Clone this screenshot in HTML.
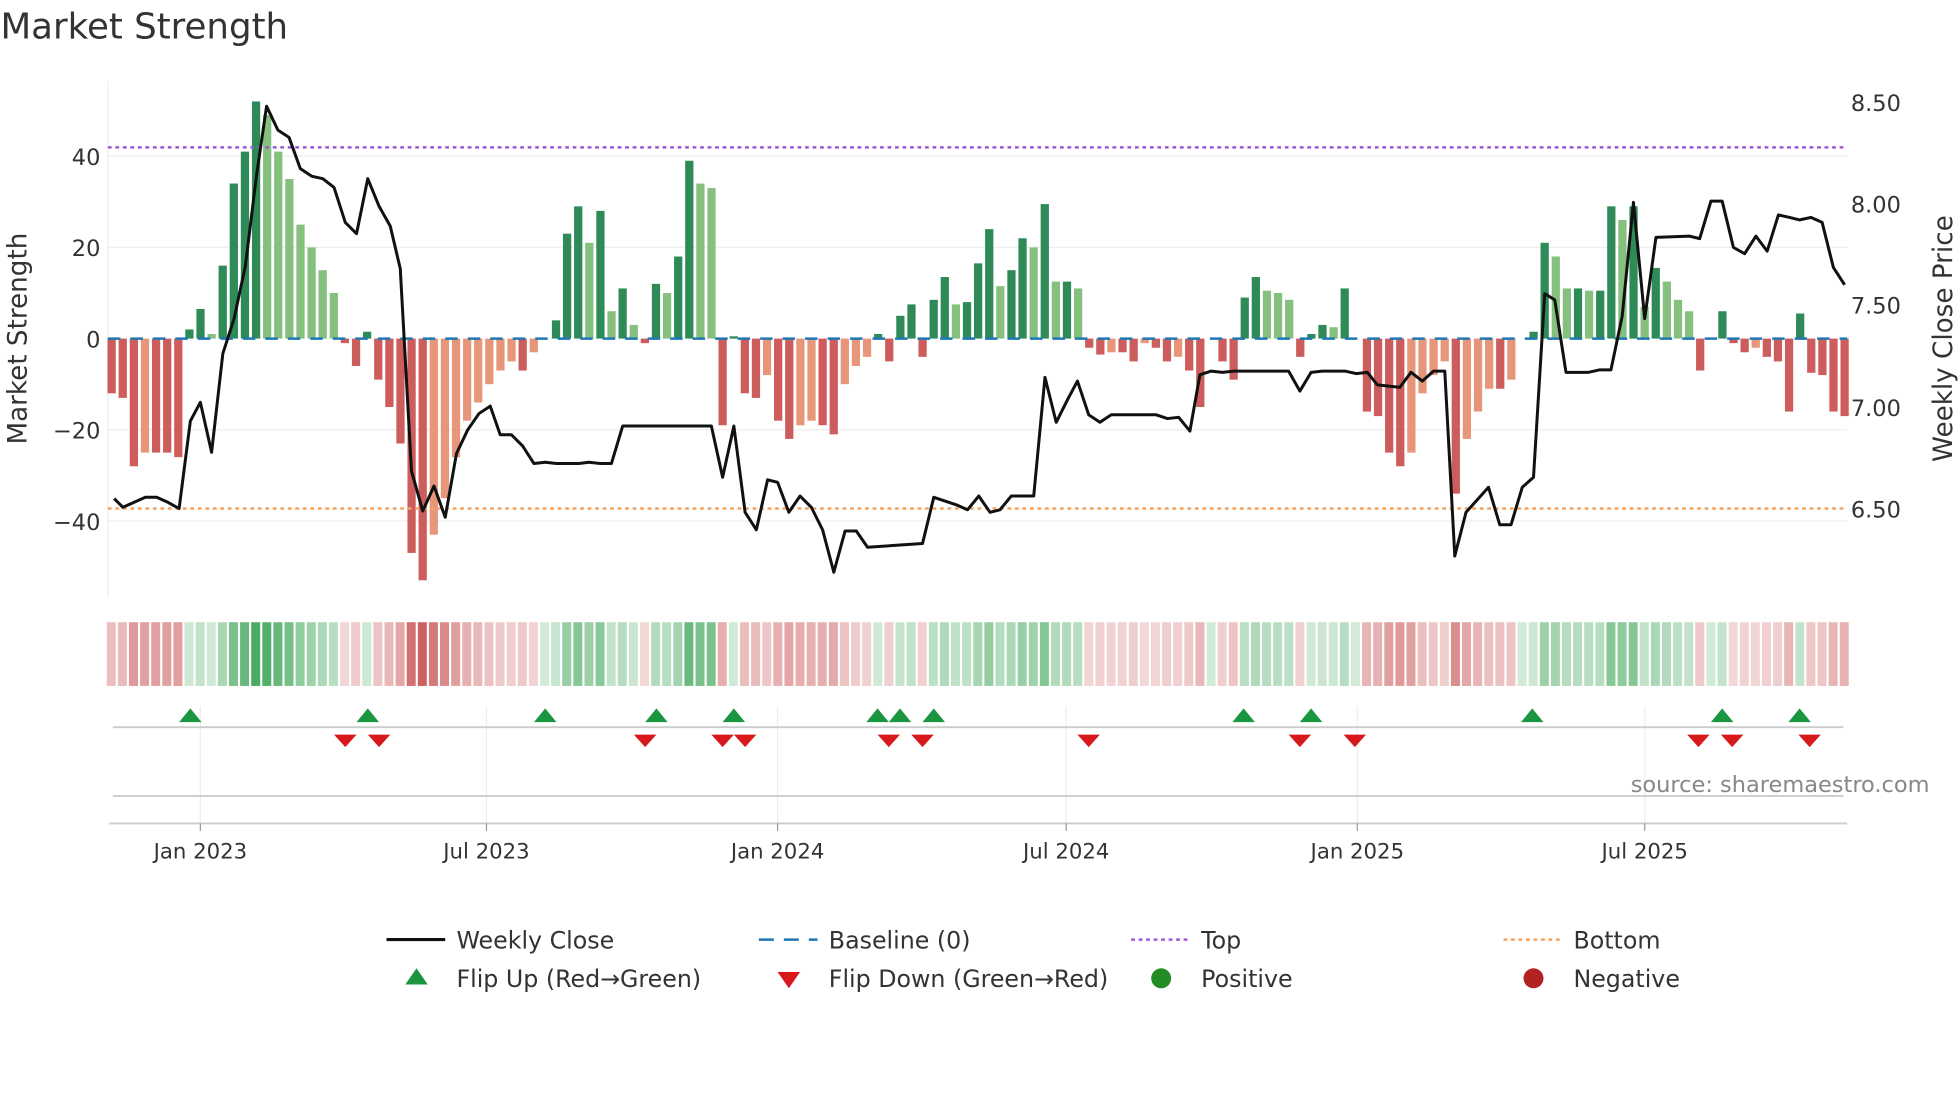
<!DOCTYPE html>
<html><head><meta charset="utf-8"><style>
html,body{margin:0;padding:0;background:#fff;}
svg{display:block;font-family:"DejaVu Sans","Liberation Sans",sans-serif;}
</style></head><body>
<svg id="s" width="1960" height="1102" viewBox="0 0 1568 882" xmlns="http://www.w3.org/2000/svg">
<rect width="1568" height="882" fill="#fff"/>
<text x="0" y="31" font-size="28.5" fill="#333">Market Strength</text>
<g stroke="#eee" stroke-width="1">
<line x1="86" y1="125" x2="1478" y2="125"/><line x1="86" y1="198" x2="1478" y2="198"/>
<line x1="86" y1="344" x2="1478" y2="344"/><line x1="86" y1="417" x2="1478" y2="417"/>
</g>
<line x1="86" y1="65" x2="86" y2="478" stroke="#eee"/>
<g font-size="18" fill="#333" text-anchor="end">
<text x="80" y="132">40</text><text x="80" y="205">20</text><text x="80" y="278">0</text>
<text x="80" y="351">−20</text><text x="80" y="424">−40</text>
</g>
<g font-size="18" fill="#333">
<text x="1481" y="89">8.50</text><text x="1481" y="170">8.00</text><text x="1481" y="251">7.50</text>
<text x="1481" y="333">7.00</text><text x="1481" y="414">6.50</text>
</g>
<text transform="translate(21,271) rotate(-90)" font-size="21" fill="#333" text-anchor="middle">Market Strength</text>
<text transform="translate(1562,271) rotate(-90)" font-size="21" fill="#333" text-anchor="middle">Weekly Close Price</text>
<g id="bars"></g>
<line x1="86" y1="271" x2="1478" y2="271" stroke="#1f77b4" stroke-width="2" stroke-dasharray="10,8"/>
<line x1="86" y1="118" x2="1478" y2="118" stroke="#9b59d6" stroke-width="2" stroke-dasharray="3,3"/>
<line x1="86" y1="407" x2="1478" y2="407" stroke="#f4a460" stroke-width="2" stroke-dasharray="3,3"/>
<polyline id="price" fill="none" stroke="#111" stroke-width="2.4" stroke-linejoin="round"/>
<g id="heat"></g>
<g stroke="#eee"><line x1="160" y1="565" x2="160" y2="659"/><line x1="389" y1="565" x2="389" y2="659"/><line x1="622" y1="565" x2="622" y2="659"/><line x1="853" y1="565" x2="853" y2="659"/><line x1="1086" y1="565" x2="1086" y2="659"/><line x1="1316" y1="565" x2="1316" y2="659"/></g>
<line x1="90" y1="582" x2="1475" y2="582" stroke="#ccc" stroke-width="1.5"/>
<line x1="90" y1="637" x2="1475" y2="637" stroke="#ccc" stroke-width="1.5"/>
<line x1="87" y1="659" x2="1478" y2="659" stroke="#ccc" stroke-width="1.5"/>
<g id="marks"></g>
<text x="1544" y="634" font-size="18" fill="#888" text-anchor="end">source: sharemaestro.com</text>
<g stroke="#999"><line x1="160" y1="659" x2="160" y2="665"/><line x1="389" y1="659" x2="389" y2="665"/><line x1="622" y1="659" x2="622" y2="665"/><line x1="853" y1="659" x2="853" y2="665"/><line x1="1086" y1="659" x2="1086" y2="665"/><line x1="1316" y1="659" x2="1316" y2="665"/></g>
<g font-size="17" fill="#333" text-anchor="middle">
<text x="160" y="687">Jan 2023</text><text x="389" y="687">Jul 2023</text><text x="622" y="687">Jan 2024</text>
<text x="853" y="687">Jul 2024</text><text x="1086" y="687">Jan 2025</text><text x="1316" y="687">Jul 2025</text>
</g>
<g font-size="19" fill="#333">
<line x1="309" y1="752" x2="356" y2="752" stroke="#111" stroke-width="2.5"/>
<text x="365" y="759">Weekly Close</text>
<line x1="607" y1="752" x2="654" y2="752" stroke="#1f77b4" stroke-width="2" stroke-dasharray="12,8"/>
<text x="663" y="759">Baseline (0)</text>
<line x1="905" y1="752" x2="952" y2="752" stroke="#9b59d6" stroke-width="2" stroke-dasharray="3,3"/>
<text x="961" y="759">Top</text>
<line x1="1203" y1="752" x2="1250" y2="752" stroke="#f4a460" stroke-width="2" stroke-dasharray="3,3"/>
<text x="1259" y="759">Bottom</text>
<polygon points="333,775 324,788 342,788" fill="#1a9641"/>
<text x="365" y="790">Flip Up (Red→Green)</text>
<polygon points="622,778 640,778 631,791" fill="#d7191c"/>
<text x="663" y="790">Flip Down (Green→Red)</text>
<circle cx="929" cy="783" r="8" fill="#228b22"/>
<text x="961" y="790">Positive</text>
<circle cx="1227" cy="783" r="8" fill="#b22222"/>
<text x="1259" y="790">Negative</text>
</g>
</svg>
<script>
var v=[-12,-13,-28,-25,-25,-25,-26,2,6.5,1,16,34,41,52,49,41,35,25,20,15,10,-1,-6,1.5,-9,-15,-23,-47,-53,-43,-35,-26,-18,-14,-10,-7,-5,-7,-3,0,4,23,29,21,28,6,11,3,-1,12,10,18,39,34,33,-19,0.5,-12,-13,-8,-18,-22,-19,-18,-19,-21,-10,-6,-4,1,-5,5,7.5,-4,8.5,13.5,7.5,8,16.5,24,11.5,15,22,20,29.5,12.5,12.5,11,-2,-3.5,-3,-3,-5,-1,-2,-5,-4,-7,-15,0,-5,-9,9,13.5,10.5,10,8.5,-4,1,3,2.5,11,0,-16,-17,-25,-28,-25,-12,-8,-5,-34,-22,-16,-11,-11,-9,0,1.5,21,18,11,11,10.5,10.5,29,26,29,7,15.5,12.5,8.5,6,-7,0,6,-1,-3,-2,-4,-5,-16,5.5,-7.5,-8,-16,-17];
var n=v.length,x0=89,x1=1476,dx=(x1-x0)/(n-1),ns="http://www.w3.org/2000/svg";
function el(t,a,p){var e=document.createElementNS(ns,t);for(var k in a)e.setAttribute(k,a[k]);p.appendChild(e);}
var B=document.getElementById('bars'),H=document.getElementById('heat');
for(var i=0;i<n;i++){var x=x0+i*dx,val=v[i],p=i?v[i-1]:0,h=Math.abs(val)*3.65,c;
if(val>=0)c=val>=p?'#2e8b57':'#86c07f';else c=val<=p?'#cd5c5c':'#e8967a';
if(h>0.3)el('rect',{x:x-3.3,y:val>=0?271-h:271,width:6.6,height:h,fill:c},B);
var a=0.22+0.68*Math.min(1,Math.abs(val)/53);
el('rect',{x:x-3.9,y:498,width:7.2,height:51,fill:val>=0?'rgba(52,160,78,'+a+')':'rgba(200,80,80,'+a+')'},H);}
var pts=[[91,399],[98,406],[107,402],[116,398],[125,398],[134,402],[143,407],[152,337],[160,322],[169,362],[178,283],[187,255],[196,213],[205,140],[213,85],[222,104],[231,110],[240,135],[249,141],[258,143],[267,150],[276,178],[285,187],[294,143],[303,165],[312,181],[320,215],[329,377],[338,409],[347,389],[356,414],[365,363],[374,344],[383,331],[392,325],[400,348],[409,348],[418,357],[427,371],[436,370],[445,371],[463,371],[471,370],[480,371],[489,371],[498,341],[569,341],[578,382],[587,341],[596,410],[605,424],[614,384],[622,386],[631,410],[640,397],[649,406],[658,424],[667,458],[676,425],[685,425],[694,438],[738,435],[747,398],[756,401],[765,404],[774,408],[783,397],[792,410],[800,408],[809,397],[827,397],[836,302],[845,338],[854,320],[862,305],[871,332],[880,338],[889,332],[925,332],[934,335],[943,334],[952,345],[960,300],[969,297],[978,298],[987,297],[1031,297],[1040,313],[1049,298],[1058,297],[1076,297],[1085,299],[1094,298],[1102,308],[1120,310],[1129,298],[1138,305],[1147,297],[1156,297],[1164,445],[1173,410],[1182,400],[1191,390],[1200,420],[1209,420],[1218,390],[1227,382],[1236,235],[1244,240],[1253,298],[1271,298],[1280,296],[1289,296],[1298,253],[1307,162],[1316,255],[1325,190],[1352,189],[1360,191],[1369,161],[1378,161],[1387,198],[1396,203],[1405,189],[1414,201],[1423,172],[1432,174],[1440,176],[1449,174],[1458,178],[1467,214],[1476,228]];
document.getElementById('price').setAttribute('points',pts.map(function(q){return q.join(',')}).join(' '));
var M=document.getElementById('marks');
[152,294,436,525,587,702,720,747,995,1049,1226,1378,1440].forEach(function(x){el('polygon',{points:(x)+',567 '+(x-9)+',578 '+(x+9)+',578',fill:'#1a9641'},M);});
[276,303,516,578,596,711,738,871,1040,1084,1359,1386,1448].forEach(function(x){el('polygon',{points:(x-9)+',588 '+(x+9)+',588 '+x+',598',fill:'#d7191c'},M);});
</script>
</body></html>
